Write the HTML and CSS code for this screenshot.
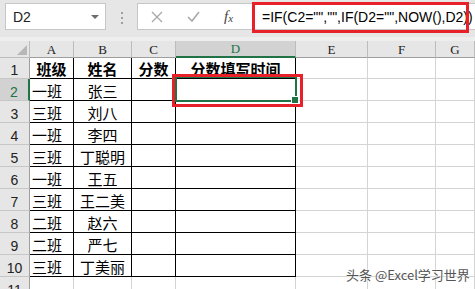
FILE: index.html
```html
<!DOCTYPE html>
<html lang="zh">
  <head>
    <meta charset="utf-8" />
    <title>分数填写时间</title>
    <link rel="stylesheet" href="styles.css">
  </head>
  <body>
    <div class="page">
      <!-- name box + formula bar -->
      <div class="toolbar">
        <div class="namebox">
          <span>D2</span>
          <span class="caret"></span>
        </div>
        <div class="dots"><i></i><i></i><i></i></div>
        <div class="fbox">
          <span class="ico">
            <svg width="12" height="12" viewBox="0 0 12 12"><path d="M1 1 L11 11 M11 1 L1 11" stroke="#a8a8a8" stroke-width="1.3" fill="none"/></svg>
          </span>
          <span class="ico">
            <svg width="13" height="11" viewBox="0 0 13 11"><path d="M1 6 L5 10 L12 1" stroke="#a8a8a8" stroke-width="1.6" fill="none"/></svg>
          </span>
          <span class="fx">f<sub>x</sub></span>
          <span class="formula">=IF(C2="","",IF(D2="",NOW(),D2))</span>
        </div>
      </div>
      <div class="strip"></div>

      <!-- sheet -->
      <div class="sheet">
        <div class="corner"><span class="tri"></span></div>
        <div class="hd">A</div>
        <div class="hd">B</div>
        <div class="hd">C</div>
        <div class="hd on">D</div>
        <div class="hd">E</div>
        <div class="hd">F</div>
        <div class="hd">G</div>

        <div class="rh">1</div>
        <div class="t b">班级</div><div class="t b">姓名</div><div class="t b">分数</div><div class="t b">分数填写时间</div>
        <div class="c"></div><div class="c"></div><div class="c"></div>

        <div class="rh on">2</div>
        <div class="t l">一班</div><div class="t">张三</div><div class="t"></div><div class="t"></div>
        <div class="c"></div><div class="c"></div><div class="c"></div>

        <div class="rh">3</div>
        <div class="t l">三班</div><div class="t">刘八</div><div class="t"></div><div class="t"></div>
        <div class="c"></div><div class="c"></div><div class="c"></div>

        <div class="rh">4</div>
        <div class="t l">一班</div><div class="t">李四</div><div class="t"></div><div class="t"></div>
        <div class="c"></div><div class="c"></div><div class="c"></div>

        <div class="rh">5</div>
        <div class="t l">三班</div><div class="t">丁聪明</div><div class="t"></div><div class="t"></div>
        <div class="c"></div><div class="c"></div><div class="c"></div>

        <div class="rh">6</div>
        <div class="t l">一班</div><div class="t">王五</div><div class="t"></div><div class="t"></div>
        <div class="c"></div><div class="c"></div><div class="c"></div>

        <div class="rh">7</div>
        <div class="t l">三班</div><div class="t">王二美</div><div class="t"></div><div class="t"></div>
        <div class="c"></div><div class="c"></div><div class="c"></div>

        <div class="rh">8</div>
        <div class="t l">二班</div><div class="t">赵六</div><div class="t"></div><div class="t"></div>
        <div class="c"></div><div class="c"></div><div class="c"></div>

        <div class="rh">9</div>
        <div class="t l">二班</div><div class="t">严七</div><div class="t"></div><div class="t"></div>
        <div class="c"></div><div class="c"></div><div class="c"></div>

        <div class="rh">10</div>
        <div class="t l">三班</div><div class="t">丁美丽</div><div class="t"></div><div class="t"></div>
        <div class="c"></div><div class="c"></div><div class="c"></div>

        <div class="rh">11</div>
        <div class="c"></div><div class="c"></div><div class="c"></div><div class="c"></div>
        <div class="c"></div><div class="c"></div><div class="c"></div>
      </div>

      <!-- overlays -->
      <div class="selbox"><span class="handle"></span></div>
      <div class="mark mark-cell"></div>
      <div class="mark mark-formula"></div>
      <div class="watermark">头条 @Excel学习世界</div>
    </div>
  </body>
</html>
```

FILE: styles.css
```css
body {
  margin: 0;
  background: #fff;
  font-family: "Noto Sans CJK SC", sans-serif;
}

.page {
  position: relative;
  width: 475px;
  height: 289px;
  overflow: hidden;
}

/* formula bar */
.toolbar {
  display: flex;
  height: 37px;
  padding-top: 3px;
  box-sizing: border-box;
  background: #e6e6e6;
}

.strip {
  height: 4px;
  background: #eeeeee;
}

.namebox {
  display: flex;
  align-items: center;
  justify-content: space-between;
  margin-left: 5px;
  width: 101px;
  height: 27px;
  box-sizing: border-box;
  padding: 0 6px 0 7px;
  background: #fff;
  border: 1px solid #c6c6c6;
  font: 14px "Liberation Sans", sans-serif;
  color: #222;
}

.caret {
  width: 0;
  height: 0;
  border-left: 4px solid transparent;
  border-right: 4px solid transparent;
  border-top: 4px solid #6d6d6d;
}

.dots {
  width: 31px;
  display: flex;
  flex-direction: column;
  align-items: center;
  padding-top: 9px;
  gap: 3px;
}

.dots i {
  width: 2px;
  height: 2px;
  background: #a0a0a0;
}

.fbox {
  flex: 1;
  display: flex;
  align-items: center;
  height: 27px;
  margin-right: -20px;
  box-sizing: border-box;
  background: #fff;
  border: 1px solid #c6c6c6;
  padding-left: 13px;
}

.ico {
  width: 36px;
  display: flex;
}

.fx {
  width: 38px;
  font: italic 15px "Liberation Serif", serif;
  color: #444;
  margin-left: 1px;
}

.fx sub {
  font-size: 11px;
  vertical-align: -1px;
}

.formula {
  font: 14px "Liberation Sans", sans-serif;
  color: #000;
  white-space: nowrap;
}

/* sheet grid */
.sheet {
  display: grid;
  grid-template-columns: 30px 44px 58px 44px 120px 72px 68px 1fr;
  grid-template-rows: 17px 21px repeat(10, 22px) 22px;
}

.sheet > div {
  box-sizing: border-box;
  border-right: 1px solid #d4d4d4;
  border-bottom: 1px solid #d4d4d4;
  display: flex;
  align-items: center;
  justify-content: center;
}

.corner {
  position: relative;
  background: #e6e6e6;
  border-color: #bcbcbc !important;
}

.tri {
  position: absolute;
  right: 2px;
  bottom: 2px;
  width: 0;
  height: 0;
  border-left: 10px solid transparent;
  border-bottom: 10px solid #b7b7b7;
}

.hd {
  background: #e6e6e6;
  border-color: #bcbcbc !important;
  border-bottom-color: #9e9e9e !important;
  font: 13px "Liberation Serif", serif;
  color: #222;
  padding-top: 1px;
}

.hd.on {
  background: #d2d2d2;
  color: #217346;
  border-bottom: 2px solid #217346 !important;
}

.rh {
  background: #e6e6e6;
  border-color: #c6c6c6 !important;
  border-right-color: #9e9e9e !important;
  font: 14px "Liberation Sans", sans-serif;
  color: #222;
  padding-top: 4px;
}

.rh.on {
  background: #d2d2d2;
  color: #217346;
  border-right: 2px solid #217346 !important;
}

.t {
  border-color: #000 !important;
  font-size: 15px;
  color: #000;
  padding-top: 1px;
}

.t.b {
  font-weight: bold;
}

.t.l {
  justify-content: flex-start;
  padding-left: 2px;
}

/* selected cell D2 */
.selbox {
  position: absolute;
  left: 175px;
  top: 76px;
  width: 122px;
  height: 26px;
  box-sizing: border-box;
  border: 2px solid #217346;
}

.handle {
  position: absolute;
  right: -4px;
  bottom: -4px;
  width: 6px;
  height: 6px;
  background: #217346;
  border: 1px solid #fff;
}

/* red callouts */
.mark {
  position: absolute;
  box-sizing: border-box;
  border: 3px solid #e8202a;
}

.mark-cell {
  left: 172px;
  top: 74px;
  width: 131px;
  height: 33px;
}

.mark-formula {
  left: 252px;
  top: 2px;
  width: 217px;
  height: 31px;
}

.watermark {
  position: absolute;
  left: 346px;
  top: 265px;
  font-size: 13px;
  color: #555;
  white-space: nowrap;
  text-shadow: 0 0 2px #fff, 0 0 2px #fff;
}
```
